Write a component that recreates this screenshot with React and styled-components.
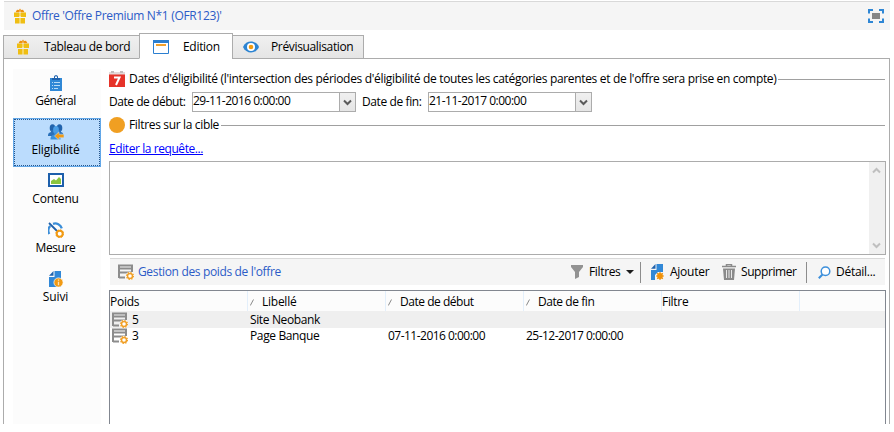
import React from "react";
import styled, { createGlobalStyle, css } from "styled-components";

const Global = createGlobalStyle`
  * { box-sizing: border-box; }
  body { margin: 0; background: #fff; color: #000; font: 12px/16px "Open Sans", "Noto Sans", sans-serif; }
`;

const Page = styled.div`
  width: 890px;
  height: 424px;
  padding: 1px 0 0 3px;
  display: flex;
  flex-direction: column;
  overflow: hidden;
`;
const Text = styled.span`
  white-space: pre;
  letter-spacing: ${(p) => p.$ls ?? -0.35}px;
`;
const Icon = styled.svg`
  display: block;
  flex: none;
`;

const TitleBar = styled.header`
  flex: none;
  height: 29px;
  margin-left: 1px;
  padding: 0 6px 0 8px;
  display: flex;
  align-items: center;
  gap: 4px;
  background: #f5f5f5;
  border-top: 1px solid #d9d9d9;
  color: #2c5bc7;
  > :last-child { margin-left: auto; }
`;

const Tabs = styled.nav`
  flex: none;
  display: flex;
  align-items: flex-end;
  height: 29px;
  margin-bottom: -1px;
  position: relative;
`;
const Tab = styled.div`
  display: flex;
  align-items: center;
  gap: ${(p) => p.$gap}px;
  width: ${(p) => p.$w}px;
  height: 24px;
  padding-left: ${(p) => p.$pad}px;
  border: 1px solid #acacac;
  background: linear-gradient(#f0f0f0, #e5e5e5);
  margin-right: -1px;
  ${(p) => p.$active && css`
    height: 26px;
    background: #fff;
    border-bottom-color: #fff;
    padding-top: 1px;
  `}
`;

const Pane = styled.main`
  flex: 1;
  min-height: 0;
  width: 887px;
  display: flex;
  gap: 8px;
  padding: 10px 3px 0 9px;
  border: 1px solid #acacac;
  border-bottom: 0;
`;
const Sidebar = styled.aside`
  flex: none;
  width: 88px;
  background: #fcfcfc;
`;
const SideItem = styled.div`
  height: 49px;
  padding: 5px 3px 0 0;
  display: flex;
  flex-direction: column;
  align-items: center;
  gap: 2px;
  border: 1px solid transparent;
  ${(p) => p.$active && css`
    background: #bbdcfd;
    border-color: #62a7e8;
    outline: 1px dotted #26568c;
    outline-offset: -2px;
  `}
`;

const Content = styled.section`
  flex: 1;
  min-width: 0;
  display: flex;
  flex-direction: column;
`;
const Group = styled.div`
  display: flex;
  align-items: center;
  height: 20px;
  gap: 4px;
  margin-right: 1px;
  &::after {
    content: "";
    flex: 1;
    height: 1px;
    margin-left: -2px;
    background: #a0a0a0;
  }
`;
const Dates = styled.div`
  display: flex;
  align-items: center;
  height: 20px;
  margin: 3px 0;
`;
const Field = styled.label`
  width: ${(p) => p.$w}px;
`;
const Combo = styled.div`
  display: flex;
  width: 164px;
  height: 20px;
  margin-right: 6px;
  border: 1px solid #acacac;
`;
const ComboValue = styled.div`
  flex: 1;
`;
const ComboButton = styled.div`
  width: 16px;
  display: flex;
  align-items: center;
  justify-content: center;
  border-left: 1px solid #acacac;
  background: linear-gradient(#f0f0f0, #e5e5e5);
`;
const Link = styled.a`
  height: 16px;
  margin: 6px 0 4px;
  color: #00f;
  text-decoration: underline;
`;
const QueryBox = styled.div`
  flex: none;
  height: 94px;
  display: flex;
  justify-content: flex-end;
  border: 1px solid #acacac;
`;
const Scrollbar = styled.div`
  width: 16px;
  padding: 5px 3px;
  display: flex;
  flex-direction: column;
  justify-content: space-between;
  background: #f0f0f0;
`;

const Toolbar = styled.div`
  flex: none;
  height: 27px;
  margin: 3px 1px 5px;
  padding-left: 8px;
  display: flex;
  align-items: center;
  background: #f5f5f5;
  border-top: 1px solid #d9d9d9;
`;
const ToolbarTitle = styled.div`
  flex: 1;
  display: flex;
  align-items: center;
  gap: 4px;
  color: #2c5bc7;
`;
const Tool = styled.div`
  flex: none;
  display: flex;
  align-items: center;
  gap: ${(p) => p.$gap}px;
  width: ${(p) => p.$w}px;
  padding-left: ${(p) => p.$pad ?? 0}px;
`;
const Divider = styled.div`
  width: 1px;
  height: 21px;
  background: #8c8c8c;
`;

const Table = styled.div`
  flex: 1;
  min-height: 0;
  border: 1px solid #828790;
  border-bottom: 0;
`;
const Row = styled.div`
  display: grid;
  grid-template-columns: 138px 138px 138px 138px 138px 1fr;
  align-items: end;
  height: ${(p) => (p.$head ? 20 : p.$sel ? 17 : 16)}px;
  background: ${(p) => (p.$head ? "#fcfcfc" : p.$sel ? "#efefef" : "#fff")};
`;
const HeadCell = styled.div`
  height: 20px;
  display: flex;
  align-items: center;
  gap: 8px;
  padding: 2px 0 0 ${(p) => p.$pad}px;
  border-right: 1px solid #e3effb;
  &:last-child { border-right: 0; }
`;
const Cell = styled.div`
  height: 16px;
  display: flex;
  align-items: center;
  gap: 4px;
  padding-left: 2px;
`;

const Gift = () => (
  <Icon width="16" height="16" viewBox="0 0 16 16">
    <path d="M3.5 4.2 5 1.7l2 .2L8 .5l1 1.4 2-.2 1.5 2.500z" fill="#ee8f0c" />
    <path d="M6.700 3.400 8 2.200l1.300 1.200z" fill="#f6d9a0" />
    <path d="M2 4.500h5V9H2zM9 4.500h5V9H9zM3 10h4v5.500H3zM9 10h4v5.500H9z" fill="#efbe13" />
    <path d="M7 5h2v3.500H7zM7 10h2v5.500H7z" fill="#f4d668" />
  </Icon>
);
const Fullscreen = () => (
  <Icon width="16" height="14" viewBox="0 0 16 14">
    <path d="M1 4.500V1h4M11 1h4v3.500M15 9.500V13h-4M5 13H1V9.500" fill="none" stroke="#2f87d5" strokeWidth="2" />
    <path d="M4 4h8v6H4z" fill="#868686" />
  </Icon>
);
const WindowIcon = () => (
  <Icon width="16" height="14" viewBox="0 0 16 14">
    <path d="M.500.500h15v13H.500z" fill="#fff" stroke="#2c7fd0" />
    <path d="M0 0h16v3H0z" fill="#2c7fd0" />
    <path d="M3 4h10v2H3z" fill="#f2a12b" />
  </Icon>
);
const Eye = () => (
  <Icon width="16" height="12" viewBox="0 0 16 12">
    <path d="M0 6C3-1.300 13-1.300 16 6 13 13.300 3 13.300 0 6z" fill="#2c84d2" />
    <circle cx="8" cy="6" r="4" fill="#fff" />
    <circle cx="8" cy="6" r="2.300" fill="#f09a10" />
  </Icon>
);
const Clipboard = () => (
  <Icon width="16" height="16" viewBox="0 0 16 16">
    <path d="M2 3h12v13H2z" fill="#3088d6" />
    <path d="M4 5V3h2V1.500L7 .300h2l1 1.200V3h2v2z" fill="#1f62ad" />
    <path d="M7 1.500h2V3H7z" fill="#fff" />
    <path d="M4 7.500h1M6 7.500h6M4 10.500h1M6 10.500h6M4 13.500h1M6 13.500h4" stroke="#b9dcf6" />
  </Icon>
);
const People = () => (
  <Icon width="16" height="16" viewBox="0 0 16 16">
    <ellipse cx="4.500" cy="4" rx="2.800" ry="3.800" fill="#2263ac" />
    <ellipse cx="11.500" cy="4" rx="2.800" ry="3.800" fill="#2263ac" />
    <path d="M0 12c0-3 1.500-3.500 3-4V6h10v2c1.500.500 2.500 1 2.500 4z" fill="#2a70b9" />
    <ellipse cx="8" cy="6" rx="2.900" ry="3.900" fill="#4a9ee6" />
    <path d="M2.500 15.500c0-3.500 1.500-4.500 4-5V8.500h3v2l3 1.500v3.500z" fill="#3a91dc" />
    <path d="M6.500 12 11 7.800v2.400h5v3.600h-5v2.400z" fill="#f19a13" stroke="#bbdcfd" strokeWidth=".6" />
  </Icon>
);
const Picture = () => (
  <Icon width="16" height="16" viewBox="0 0 16 16">
    <path d="M1 1h14v12H1z" fill="#fff" stroke="#1d5fab" strokeWidth="2" />
    <path d="M3 11V8l3-2 2 1.500L11 4l2 2v5z" fill="#8ac53e" />
  </Icon>
);
const Gauge = () => (
  <Icon width="16" height="16" viewBox="0 0 16 16">
    <path d="M1.200 12A7 7 0 0 1 2.200 4M5 1.800a7 7 0 0 1 8.800 4.500" fill="none" stroke="#3a8dd8" strokeWidth="2.300" />
    <path d="M1 1l8 8" stroke="#1e5fa9" strokeWidth="1.800" />
    <circle cx="11.700" cy="11.700" r="3" fill="#fff" stroke="#f19a13" strokeWidth="2" />
    <circle cx="11.700" cy="11.700" r="3.900" fill="none" stroke="#f19a13" strokeWidth="1" strokeDasharray="1.500 1.560" />
  </Icon>
);
const FileIcon = ({ info }) => (
  <Icon width="16" height="16" viewBox="0 0 16 16">
    <path d="M6.500 0H13v16H1V6h5.500z" fill="#3188d7" />
    <path d="M1 4.800 5.500 0v4.800z" fill="#1f62ad" />
    {info ? (
      <>
        <circle cx="10.500" cy="11.500" r="4.600" fill="#f19a13" stroke="#fff" strokeWidth=".7" />
        <path d="M10.500 8.500v1.300M10.500 10.700v3.500" stroke="#fbe3b8" strokeWidth="1.300" />
      </>
    ) : (
      <>
        <path d="M5 16v-5l3-3h8v8z" fill="#f5f5f5" />
        <circle cx="10" cy="12" r="2.900" fill="#f0920a" />
        <path d="M10 8v8M6 12h8M7.200 9.200l5.600 5.600M12.800 9.200l-5.600 5.600" stroke="#f0920a" strokeWidth="1.200" />
      </>
    )}
  </Icon>
);
const Calendar = () => (
  <Icon width="16" height="16" viewBox="0 0 16 16">
    <path d="M0 3h16v13H0z" fill="#e63329" />
    <path d="M0 1h16v2.500H0z" fill="#e4d9d9" />
    <path d="M2 0h3v2H2zM11 0h3v2h-3z" fill="#c3bcbc" />
    <path d="M5 6.500h5.500L7 14" fill="none" stroke="#fff" strokeWidth="2" />
  </Icon>
);
const Dot = () => (
  <Icon width="16" height="16" viewBox="0 0 16 16"><circle cx="8" cy="8" r="8" fill="#f09f22" /></Icon>
);
const Chevron = ({ up, color = "#5a5a5a" }) => (
  <Icon width="9" height="7" viewBox="0 0 9 7">
    <path d={up ? "M1 5.500 4.500 2 8 5.500" : "M1 1.500 4.500 5 8 1.500"} fill="none" stroke={color} strokeWidth="2" />
  </Icon>
);
const Weights = () => (
  <Icon width="16" height="16" viewBox="0 0 16 16">
    <path d="M1 1.500h13v3H1zM1 4v10M1 8.500h12.500M14 4v4M1 13.500h6" fill="none" stroke="#8c8c8c" strokeWidth="2" />
    <circle cx="12" cy="12" r="4" fill="#fff" />
    <circle cx="12" cy="12" r="2.500" fill="none" stroke="#f0a028" strokeWidth="1.500" />
    <circle cx="12" cy="12" r="3.500" fill="none" stroke="#f0a028" strokeWidth="1.200" strokeDasharray="1.370 1.370" />
  </Icon>
);
const Funnel = () => (
  <Icon width="12" height="14" viewBox="0 0 12 14"><path d="M0 0h12v2L8 7v5l-4 2V7L0 2z" fill="#929292" /></Icon>
);
const Caret = () => (
  <Icon width="8" height="4" viewBox="0 0 8 4"><path d="M0 0h8L4 4z" fill="#1c1c1c" /></Icon>
);
const Trash = () => (
  <Icon width="14" height="16" viewBox="0 0 14 16">
    <path d="M0 2.500h14M4.500 2.500v-2h5v2" fill="none" stroke="#8a8a8a" strokeWidth="1.500" />
    <path d="M1 4.500h12L12 16H2z" fill="#8a8a8a" />
    <path d="M4.500 6v8M7 6v8M9.500 6v8" stroke="#e8e8e8" />
  </Icon>
);
const Magnifier = () => (
  <Icon width="13" height="13" viewBox="0 0 13 13">
    <circle cx="7.500" cy="5.300" r="4.300" fill="#fff" stroke="#3c8fdb" strokeWidth="1.500" />
    <path d="M4.500 8.500.800 12.200" stroke="#3c8fdb" strokeWidth="2" />
  </Icon>
);
const SortMark = () => (
  <Icon width="4" height="7" viewBox="0 0 4 7"><path d="M.300 6.500 3.500.500" stroke="#7c7c7c" strokeWidth=".9" /></Icon>
);

const sections = [
  { label: "Général", icon: <Clipboard />, ls: -0.5 },
  { label: "Eligibilité", icon: <People />, ls: -0.15, active: true },
  { label: "Contenu", icon: <Picture />, ls: -0.22 },
  { label: "Mesure", icon: <Gauge />, ls: -0.4 },
  { label: "Suivi", icon: <FileIcon info />, ls: -0.12 },
];
const columns = [
  { label: "Poids", pad: 0, ls: -0.25 },
  { label: "Libellé", sorted: true, ls: -0.25, pad: 2 },
  { label: "Date de début", sorted: true, ls: -0.47, pad: 2 },
  { label: "Date de fin", sorted: true, ls: -0.43, pad: 2 },
  { label: "Filtre", pad: 0, ls: -0.3 },
  { label: "", pad: 0 },
];
const rows = [
  { weight: "5", label: "Site Neobank", start: "", end: "", selected: true },
  { weight: "3", label: "Page Banque", start: "07-11-2016 0:00:00", end: "25-12-2017 0:00:00" },
];

const DateCombo = ({ value }) => (
  <Combo>
    <ComboValue><Text $ls={-0.5}>{value}</Text></ComboValue>
    <ComboButton><Chevron /></ComboButton>
  </Combo>
);

export default function App() {
  return (
    <Page>
      <Global />
      <TitleBar>
        <Gift />
        <Text $ls={-0.32}>Offre 'Offre Premium N*1 (OFR123)'</Text>
        <Fullscreen />
      </TitleBar>
      <Tabs>
        <Tab $w={137} $pad={11} $gap={13}><Gift /><Text $ls={-0.35}>Tableau de bord</Text></Tab>
        <Tab $w={94} $pad={13} $gap={14} $active><WindowIcon /><Text $ls={-0.3}>Edition</Text></Tab>
        <Tab $w={132} $pad={10} $gap={12}><Eye /><Text $ls={-0.35}>Prévisualisation</Text></Tab>
      </Tabs>
      <Pane>
        <Sidebar>
          {sections.map((s) => (
            <SideItem key={s.label} $active={s.active}>{s.icon}<Text $ls={s.ls}>{s.label}</Text></SideItem>
          ))}
        </Sidebar>
        <Content>
          <Group>
            <Calendar />
            <Text $ls={-0.33}>Dates d'éligibilité (l'intersection des périodes d'éligibilité de toutes les catégories parentes et de l'offre sera prise en compte)</Text>
          </Group>
          <Dates>
            <Field $w={83}><Text $ls={-0.46}>Date de début:</Text></Field>
            <DateCombo value="29-11-2016 0:00:00" />
            <Field $w={66}><Text $ls={-0.4}>Date de fin:</Text></Field>
            <DateCombo value="21-11-2017 0:00:00" />
          </Dates>
          <Group><Dot /><Text $ls={-0.34}>Filtres sur la cible</Text></Group>
          <Link><Text $ls={-0.42}>Editer la requête...</Text></Link>
          <QueryBox>
            <Scrollbar><Chevron up color="#bfbfbf" /><Chevron color="#bfbfbf" /></Scrollbar>
          </QueryBox>
          <Toolbar>
            <ToolbarTitle><Weights /><Text $ls={-0.35}>Gestion des poids de l'offre</Text></ToolbarTitle>
            <Tool $w={69} $gap={6}><Funnel /><Text $ls={-0.35}>Filtres</Text><Caret /></Tool>
            <Divider />
            <Tool $w={81} $pad={9} $gap={4}><FileIcon /><Text $ls={-0.25}>Ajouter</Text></Tool>
            <Tool $w={84} $gap={5}><Trash /><Text $ls={-0.43}>Supprimer</Text></Tool>
            <Divider />
            <Tool $w={78} $pad={11} $gap={5}><Magnifier /><Text $ls={-0.28}>Détail...</Text></Tool>
          </Toolbar>
          <Table>
            <Row $head>
              {columns.map((c, i) => (
                <HeadCell key={i} $pad={c.pad}>{c.sorted && <SortMark />}<Text $ls={c.ls}>{c.label}</Text></HeadCell>
              ))}
            </Row>
            {rows.map((r) => (
              <Row key={r.weight} $sel={r.selected}>
                <Cell><Weights /><Text>{r.weight}</Text></Cell>
                <Cell><Text $ls={-0.37}>{r.label}</Text></Cell>
                <Cell><Text $ls={-0.52}>{r.start}</Text></Cell>
                <Cell><Text $ls={-0.52}>{r.end}</Text></Cell>
              </Row>
            ))}
          </Table>
        </Content>
      </Pane>
    </Page>
  );
}
